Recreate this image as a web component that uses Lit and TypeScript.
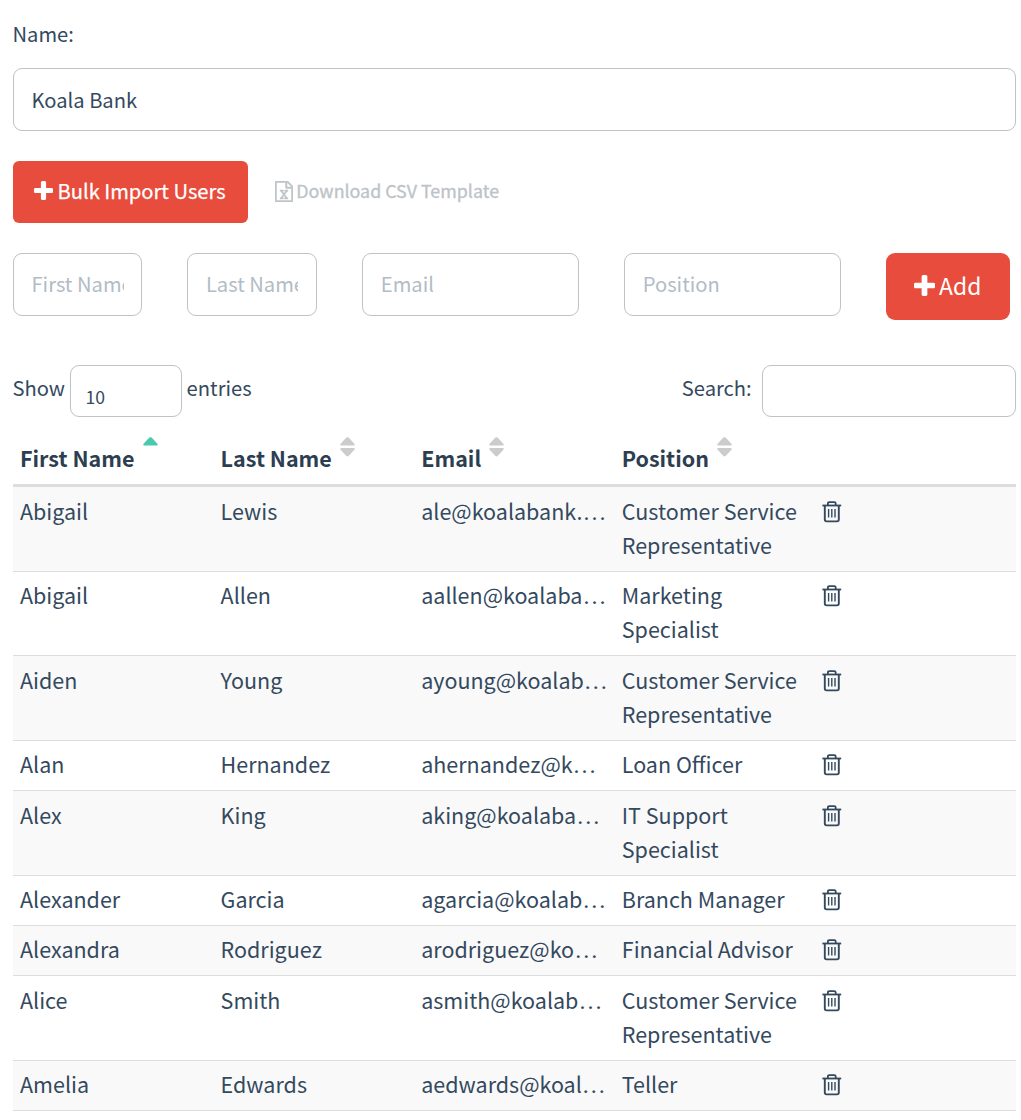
import { LitElement, html, css, svg, nothing } from "lit";
import { customElement } from "lit/decorators.js";

interface User {
  first: string;
  last: string;
  email: string;
  position: string;
}

const users: User[] = [
  { first: "Abigail", last: "Lewis", email: "ale@koalabank.", position: "Customer Service Representative" },
  { first: "Abigail", last: "Allen", email: "aallen@koalaba", position: "Marketing Specialist" },
  { first: "Aiden", last: "Young", email: "ayoung@koalab", position: "Customer Service Representative" },
  { first: "Alan", last: "Hernandez", email: "ahernandez@k", position: "Loan Officer" },
  { first: "Alex", last: "King", email: "aking@koalaba", position: "IT Support Specialist" },
  { first: "Alexander", last: "Garcia", email: "agarcia@koalab", position: "Branch Manager" },
  { first: "Alexandra", last: "Rodriguez", email: "arodriguez@ko", position: "Financial Advisor" },
  { first: "Alice", last: "Smith", email: "asmith@koalab", position: "Customer Service Representative" },
  { first: "Amelia", last: "Edwards", email: "aedwards@koal", position: "Teller" },
];

const headers = ["First Name", "Last Name", "Email", "Position"];

const plusIcon = svg`<svg class="plus" viewBox="192 128 1408 1408"><path d="M1600 736v192q0 40-28 68t-68 28h-416v416q0 40-28 68t-68 28h-192q-40 0-68-28t-28-68v-416h-416q-40 0-68-28t-28-68v-192q0-40 28-68t68-28h416v-416q0-40 28-68t68-28h192q40 0 68 28t28 68v416h416q40 0 68 28t28 68z"/></svg>`;

const excelIcon = svg`<svg class="excel" viewBox="128 0 1536 1792"><path d="M1596 380q28 28 48 76t20 88v1152q0 40-28 68t-68 28h-1344q-40 0-68-28t-28-68v-1600q0-40 28-68t68-28h896q40 0 88 20t76 48zm-444-244v376h376q-10-29-22-41l-313-313q-12-12-41-22zm384 1528v-1024h-416q-40 0-68-28t-28-68v-416h-768v1536h1280zm-979-234v106h281v-106h-75l103-161q5-7 10-16.5t7.5-13.5 3.5-4h2q1 4 5 10 2 4 4.5 7.5t6 8 6.5 8.5l107 161h-76v106h291v-106h-68l-192-273 195-282h67v-107h-279v107h74l-103 159q-4 7-10 16.5t-9 13.5l-2 3h-2q-1-4-5-10-6-11-17-23l-106-159h76v-107h-290v107h68l189 272-194 283h-68z"/></svg>`;

const trashIcon = () => svg`<svg class="trash" viewBox="0 0 20 22" fill="none" stroke="currentColor">
  <path d="M.4 4.5H19.2" stroke-width="1.8"/>
  <path d="M5.9 4.2V2.6Q5.9 1.1 7.3 1.1H12.3Q13.7 1.1 13.7 2.6V4.2" stroke-width="1.8"/>
  <path d="M2.8 4.8V18.6Q2.8 20.4 4.6 20.4H15Q16.8 20.4 16.8 18.6V4.8" stroke-width="1.9"/>
  <path d="M6.6 8V16.6M9.8 8V16.6M13 8V16.6" stroke-width="1.4"/>
</svg>`;

const sortIcon = (asc: boolean) => svg`<svg class="sort ${asc ? "asc" : ""}" viewBox="0 0 15 20">
  <path d="M6.4 .6Q7.5-.3 8.6 .6L14.4 6.8Q15.3 8.4 13.8 8.5H1.2Q-.3 8.4 .6 6.8Z"/>
  ${asc ? nothing : svg`<path d="M6.4 19Q7.5 19.9 8.6 19L14.4 12.8Q15.3 11.2 13.8 11.1H1.2Q-.3 11.2 .6 12.8Z"/>`}
</svg>`;

@customElement("app-root")
export class AppRoot extends LitElement {
  static styles = css`
    :host {
      display: block;
      box-sizing: border-box;
      width: 1021px;
      height: 1120px;
      overflow: hidden;
      padding: 18px 5px 0 13px;
      background: #fff;
      color: #34495e;
      font-family: "Noto Sans CJK SC", "Noto Sans", sans-serif;
      font-size: 20.15px;
      line-height: 32px;
    }
    * { box-sizing: border-box; }
    svg { display: block; flex: none; }
    input {
      display: block;
      min-width: 0;
      height: 63px;
      margin: 0;
      padding: 0 17.5px;
      border: 1px solid #bdc3c7;
      border-radius: 9px;
      outline: 0;
      background: #fff;
      color: #34495e;
      font: inherit;
    }
    input::placeholder { color: #b2bcc5; opacity: 1; }
    .name-label { display: block; margin-left: -0.5px; }
    .name { width: 100%; margin-top: 18px; }
    .actions { display: flex; margin-top: 30px; align-items: center; }
    .button {
      display: flex;
      align-items: center;
      border: 0;
      margin: 0;
      padding: 0 0 2px;
      background: #e74c3c;
      color: #fff;
      font: inherit;
    }
    .plus { fill: currentColor; width: 19px; height: 19px; }
    .import {
      width: 235px;
      height: 62px;
      padding-left: 21.2px;
      gap: 4.3px;
      border-radius: 6px;
      font-size: 20.15px;
      -webkit-text-stroke: 0.25px currentColor;
    }
    .import .plus { margin-top: -1px; }
    .template {
      display: flex;
      align-items: center;
      margin-left: 27px;
      padding-bottom: 4px;
      gap: 3.3px;
      color: #bdc3c7;
      font-size: 17.85px;
      -webkit-text-stroke: 0.35px currentColor;
    }
    .excel { width: 18px; height: 21px; margin-top: 2px; fill: currentColor; stroke: currentColor; stroke-width: 40px; }
    .new-user { display: flex; margin-top: 30px; gap: 45px; align-items: flex-start; }
    .new-user input { padding-bottom: 2px; }
    .short { width: 129.4px; }
    .long { width: 217px; }
    .new-user .long { padding-left: 18px; }
    .add { width: 124px; height: 67px; padding: 0 0 3px 28px; gap: 4.3px; border-radius: 9px; font-size: 22.85px; }
    .add .plus { width: 21px; height: 21px; }
    .controls { display: flex; height: 52px; margin-top: 45px; line-height: 46px; }
    .show { margin-left: -0.5px; }
    .length {
      width: 112px;
      height: 52px;
      margin: 0 4.2px 0 5.4px;
      padding: 8px 14px 0;
      border: 1px solid #bdc3c7;
      border-radius: 9px;
      font-size: 17.6px;
    }
    .search-label { margin-left: auto; margin-right: 10.3px; }
    .search { width: 254px; height: 52px; }
    .table { margin-top: 20px; font-size: 21.5px; line-height: 34.28px; }
    .row {
      display: grid;
      grid-template-columns: repeat(5, 200.6px);
      padding: 6.52px 0 8.51px;
      border-bottom: 1px solid #ddd;
    }
    .row:nth-child(even) { background: #f9f9f9; }
    .head { height: 50px; padding: 0; border-bottom: 3px solid #ddd; font-weight: 700; color: #2c3e50; }
    .head .cell { display: flex; gap: 8.2px; }
    .head .label { padding-top: 4px; }
    .cell { padding: 0 7px; min-width: 0; }
    .email { white-space: nowrap; padding-right: 0; }
    .dots { font-family: "Liberation Serif", serif; font-size: 24px; line-height: 0; }
    .sort { width: 15px; height: 20px; margin-top: -0.5px; fill: #ccc; }
    .asc { fill: #48c9b0; }
    .trash { width: 20px; height: 22px; margin-top: 7px; }
  `;

  render() {
    return html`
      <label class="name-label">Name:</label>
      <input class="name" .value=${"Koala Bank"} />
      <div class="actions">
        <button class="button import">${plusIcon}<span>Bulk Import Users</span></button>
        <div class="template">${excelIcon}<span>Download CSV Template</span></div>
      </div>
      <div class="new-user">
        <input class="short" placeholder="First Name" />
        <input class="short" placeholder="Last Name" />
        <input class="long" placeholder="Email" />
        <input class="long" placeholder="Position" />
        <button class="button add">${plusIcon}<span>Add</span></button>
      </div>
      <div class="controls">
        <span class="show">Show</span>
        <div class="length">10</div>
        <span>entries</span>
        <span class="search-label">Search:</span>
        <input class="search" />
      </div>
      <div class="table">
        <div class="row head">
          ${headers.map((h, i) => html`<div class="cell"><span class="label">${h}</span>${sortIcon(i === 0)}</div>`)}
        </div>
        ${users.map(
          (u) => html`<div class="row">
            <div class="cell">${u.first}</div>
            <div class="cell">${u.last}</div>
            <div class="cell email">${u.email}<span class="dots">…</span></div>
            <div class="cell">${u.position}</div>
            <div class="cell">${trashIcon()}</div>
          </div>`
        )}
      </div>
    `;
  }
}
